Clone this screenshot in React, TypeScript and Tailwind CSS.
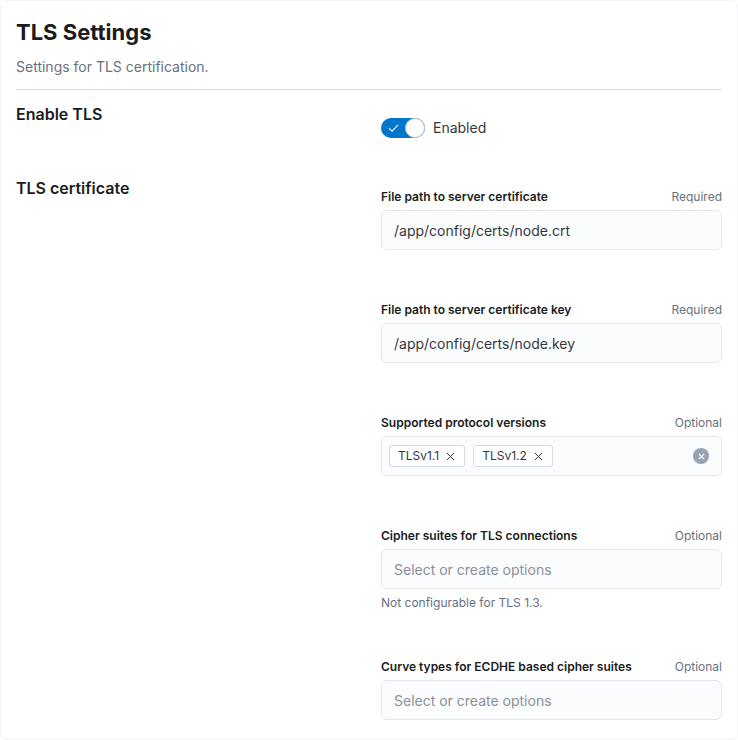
import React from "react";

const font = { fontFamily: "Inter, 'Noto Sans', sans-serif" };

function FieldLabel({ label, hint }: { label: string; hint: string }) {
  return (
    <div className="flex items-start justify-between h-5 pt-[3px] mb-1 leading-4">
      <span className="text-xs leading-4 font-semibold text-[#1a1c21]">{label}</span>
      <span className="text-xs leading-4 text-[#69707d]">{hint}</span>
    </div>
  );
}

function TextInput({ value, placeholder }: { value?: string; placeholder?: string }) {
  return (
    <div className="h-10 rounded-md border border-[#e3e7ef] bg-[#fbfcfd] px-3 pt-px flex items-center text-sm">
      {value ? (
        <span className="text-[#343741]">{value}</span>
      ) : (
        <span className="text-[#8b909a]">{placeholder}</span>
      )}
    </div>
  );
}

function Tag({ label }: { label: string }) {
  return (
    <span className="inline-flex items-center h-[22px] rounded-[3px] border border-[#d3dae6] bg-white pl-2 pr-[9px] text-xs text-[#343741]">
      {label}
      <svg className="ml-[7px] w-[9px] h-[9px]" viewBox="0 0 10 10" fill="none" stroke="#343741" strokeWidth={1.1}>
        <path d="M1 1l8 8M9 1L1 9" />
      </svg>
    </span>
  );
}

export default function App() {
  return (
    <div className="bg-white" style={font}>
      <div className="rounded-md border border-[#f1f3f6] bg-white px-[15px] pt-[17px] pb-[19px]">
        <h2 className="text-[22px] leading-7 font-bold text-[#1a1c21]">TLS Settings</h2>
        <p className="mt-[11px] text-sm leading-5 text-[#69707d]">Settings for TLS certification.</p>
        <div className="mt-3 h-px bg-[#d3dae6]" />

        <div className="grid grid-cols-2 gap-x-6 mt-3">
          <h3 className="text-base leading-6 font-semibold text-[#1a1c21]">Enable TLS</h3>
          <div className="pt-4">
            <div className="flex items-center gap-2">
              <span className="relative inline-flex w-11 h-5 rounded-full bg-[#0077cc]">
                <svg className="absolute left-[7px] top-[5px] w-[11px] h-[10px]" viewBox="0 0 12 10" fill="none" stroke="white" strokeWidth={1.2}>
                  <path d="M1 5.2l3.4 3.3L11 1.5" />
                </svg>
                <span className="absolute right-0 top-0 w-5 h-5 rounded-full bg-white border border-[#c2c8d2]" />
              </span>
              <span className="text-sm text-[#343741]">Enabled</span>
            </div>
          </div>

          <h3 className="mt-[38px] text-base leading-6 font-semibold text-[#1a1c21]">TLS certificate</h3>
          <div className="mt-[48px]">
            <FieldLabel label="File path to server certificate" hint="Required" />
            <TextInput value="/app/config/certs/node.crt" />

            <div className="mt-[49px]">
              <FieldLabel label="File path to server certificate key" hint="Required" />
              <TextInput value="/app/config/certs/node.key" />
            </div>

            <div className="mt-[49px]">
              <FieldLabel label="Supported protocol versions" hint="Optional" />
              <div className="h-10 rounded-md border border-[#e3e7ef] bg-[#fbfcfd] pl-[7px] pr-3 flex items-center gap-2">
                <Tag label="TLSv1.1" />
                <Tag label="TLSv1.2" />
                <span className="ml-auto w-4 h-4 rounded-full bg-[#98a2b3] flex items-center justify-center">
                  <svg className="w-[7px] h-[7px]" viewBox="0 0 8 8" fill="none" stroke="white" strokeWidth={1.5}>
                    <path d="M1 1l6 6M7 1L1 7" />
                  </svg>
                </span>
              </div>
            </div>

            <div className="mt-[49px]">
              <FieldLabel label="Cipher suites for TLS connections" hint="Optional" />
              <TextInput placeholder="Select or create options" />
              <p className="mt-[6px] text-xs leading-4 text-[#69707d]">Not configurable for TLS 1.3.</p>
            </div>

            <div className="mt-[45px]">
              <FieldLabel label="Curve types for ECDHE based cipher suites" hint="Optional" />
              <TextInput placeholder="Select or create options" />
            </div>
          </div>
        </div>
      </div>
    </div>
  );
}
